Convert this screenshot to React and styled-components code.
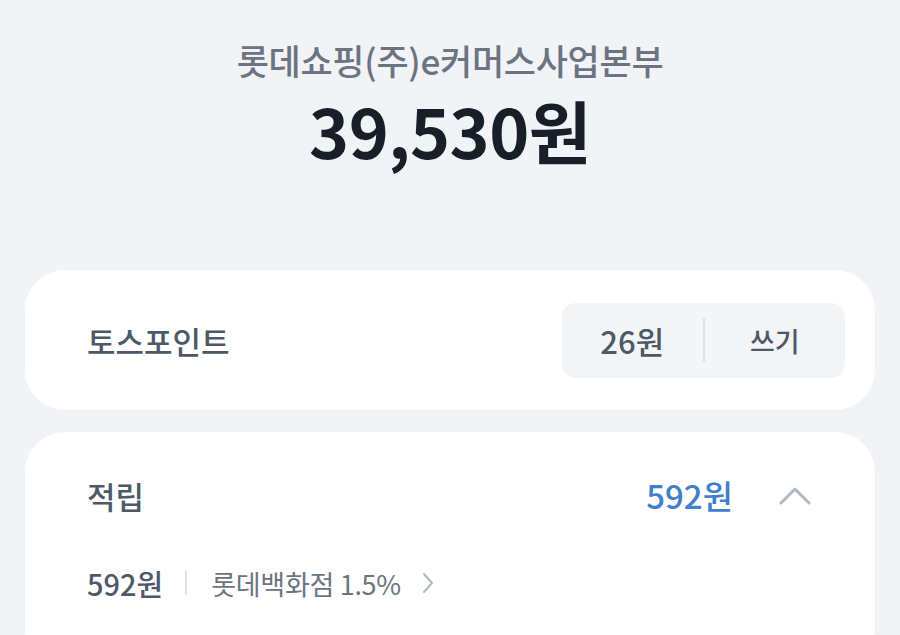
import React from 'react';
import styled, { createGlobalStyle } from 'styled-components';

const GlobalStyle = createGlobalStyle`
  html, body {
    margin: 0;
    padding: 0;
    background: #f2f3f6;
    font-family: "Noto Sans CJK KR", "Noto Sans", sans-serif;
  }
`;

const Page = styled.div`
  width: 900px;
  height: 635px;
  overflow: hidden;
  box-sizing: border-box;
  padding: 0 25px;
  background: #f2f3f6;
`;

const Header = styled.div`
  display: flex;
  flex-direction: column;
  align-items: center;
  padding-top: 34px;
  height: 270px;
  box-sizing: border-box;
`;

const Merchant = styled.div`
  font-size: 35px;
  font-weight: 500;
  color: #6b7480;
  letter-spacing: -0.3px;
  line-height: 52px;
`;

const Amount = styled.div`
  margin-top: 4px;
  font-size: 68px;
  font-weight: 700;
  color: #191f28;
  letter-spacing: -0.5px;
  line-height: 80px;
`;

const Card = styled.div`
  background: #ffffff;
  border-radius: 40px;
  padding: ${p => p.$pad || '0 30px 0 62px'};
  margin-bottom: 22px;
  box-sizing: border-box;
`;

const Row = styled.div`
  display: flex;
  align-items: center;
  justify-content: space-between;
  height: ${p => p.$h || 140}px;
`;

const Label = styled.div`
  font-size: 31px;
  font-weight: 500;
  color: #4e5968;
`;

const Pill = styled.div`
  display: flex;
  align-items: center;
  width: 283px;
  height: 75px;
  background: #f2f4f6;
  border-radius: 14px;
`;

const PillPart = styled.div`
  flex: 1;
  text-align: center;
  font-size: ${p => p.$size || 28}px;
  font-weight: 500;
  color: #4e5968;
`;

const PillDivider = styled.div`
  width: 2px;
  height: 44px;
  background: #dde0e5;
`;

const Right = styled.div`
  display: flex;
  align-items: center;
  gap: 46px;
`;

const Blue = styled.div`
  font-size: 33px;
  font-weight: 500;
  color: #3f7fcd;
`;

const Detail = styled.div`
  display: flex;
  align-items: center;
  height: 50px;
`;

const DetailAmount = styled.span`
  font-size: 29px;
  font-weight: 500;
  color: #4e5968;
`;

const DetailDivider = styled.span`
  width: 2px;
  height: 24px;
  background: #dfe2e6;
  margin: 0 24px 0 22px;
`;

const DetailText = styled.span`
  font-size: 27px;
  font-weight: 400;
  color: #6b7480;
  letter-spacing: -0.3px;
`;

const ChevronUp = () => (
  <svg width="32" height="20" viewBox="0 0 32 20" fill="none">
    <path d="M2 18 L16 4 L30 18" stroke="#b0b8c1" strokeWidth="3" strokeLinecap="round" strokeLinejoin="round" />
  </svg>
);

const ChevronRight = () => (
  <svg width="14" height="24" viewBox="0 0 14 24" fill="none" style={{ marginLeft: 20 }}>
    <path d="M3 3 L11 12 L3 21" stroke="#b0b8c1" strokeWidth="2" strokeLinecap="round" strokeLinejoin="round" />
  </svg>
);

export default function App() {
  return (
    <>
      <GlobalStyle />
      <Page>
        <Header>
          <Merchant>롯데쇼핑(주)e커머스사업본부</Merchant>
          <Amount>39,530원</Amount>
        </Header>

        <Card>
          <Row>
            <Label>토스포인트</Label>
            <Pill>
              <PillPart $size={31}>26원</PillPart>
              <PillDivider />
              <PillPart $size={27}>쓰기</PillPart>
            </Pill>
          </Row>
        </Card>

        <Card $pad="0 64px 60px 62px">
          <Row $h={126}>
            <Label>적립</Label>
            <Right>
              <Blue>592원</Blue>
              <ChevronUp />
            </Right>
          </Row>
          <Detail>
            <DetailAmount>592원</DetailAmount>
            <DetailDivider />
            <DetailText>롯데백화점 1.5%</DetailText>
            <ChevronRight />
          </Detail>
        </Card>
      </Page>
    </>
  );
}
